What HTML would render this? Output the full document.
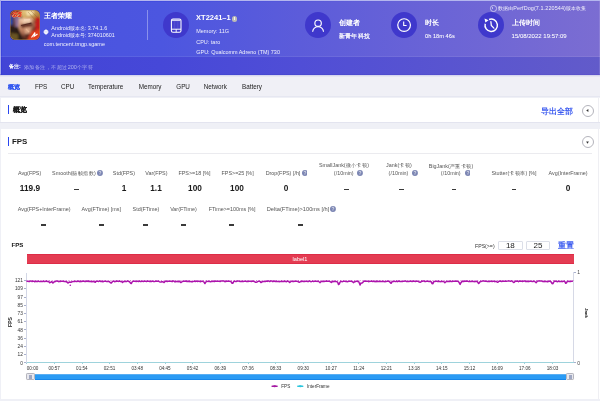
<!DOCTYPE html>
<html><head><meta charset="utf-8">
<style>
html,body{margin:0;padding:0}
body{width:600px;height:401px;overflow:hidden;position:relative;background:#eff0f6;font-family:"Liberation Sans",sans-serif;color:#333}
.a{position:absolute;white-space:nowrap}
.hdr{position:absolute;left:0;top:0;width:600px;height:75px;background:linear-gradient(90deg,rgb(72,82,224) 0%,rgb(76,86,224) 27%,rgb(92,92,218) 50%,rgb(123,109,210) 100%);box-shadow:0 1px 2px rgba(70,70,190,.3)}
.note{position:absolute;left:0;top:56.6px;width:600px;height:17.9px;background:linear-gradient(90deg,rgb(66,68,214) 0%,rgb(70,72,216) 27%,rgb(80,78,214) 50%,rgb(98,91,202) 100%)}
.w{color:#fff}
.circ{position:absolute;width:26px;height:26px;border-radius:50%;background:#3f38cc}
.circ svg{position:absolute;left:0;top:0}
.tabs{position:absolute;left:0;top:75px;width:600px;height:22px;background:#f0f0f6}
.card{position:absolute;left:1px;width:599px;background:#fff}
.lbl{position:absolute;font-size:5.4px;color:#555;line-height:8px;text-align:center;white-space:nowrap}
.val{position:absolute;font-size:9.3px;font-weight:bold;color:#1a1a1a;line-height:10px;text-align:center;white-space:nowrap;transform:scaleX(0.89)}
.q{position:absolute;width:5.6px;height:5.6px;border-radius:50%;background:#8088bc}
.q:after{content:"?";position:absolute;left:0;top:0;width:5.6px;line-height:5.6px;font-size:4.5px;color:#fff;text-align:center;font-weight:bold}
.tab{position:absolute;top:82px;font-size:6.3px;line-height:10px;color:#222}
.yl{position:absolute;width:30px;text-align:right;font-size:4.8px;line-height:6px;color:#333}
.xr{position:absolute;font-size:5px;line-height:6px;color:#444}
.xl{position:absolute;font-size:4.6px;line-height:6px;color:#333;white-space:nowrap}
</style></head><body><div id="root" style="position:absolute;left:0;top:0;width:600px;height:401px;will-change:transform;overflow:hidden;background:#eff0f6">
<div class="hdr">
  <div class="note"></div>
  <div class="a" style="left:1px;top:1px;width:599px;height:1px;background:linear-gradient(90deg,rgba(40,50,220,.5),rgba(40,50,220,.15) 40%,rgba(40,50,220,0) 70%)"></div>
  <div class="a" style="left:599px;top:0;width:1px;height:75px;background:rgba(255,255,255,.12)"></div>
  <div class="a" style="left:1px;top:1px;width:1px;height:74px;background:rgba(40,50,220,.4)"></div>
  <div class="a" style="left:0;top:0;width:600px;height:1px;background:#b4b6ee"></div>
  <div class="a" style="left:0;top:0;width:1px;height:75px;background:#a4a8ea"></div>
  <div class="a" style="left:0;top:74px;width:600px;height:1px;background:rgba(40,40,190,.35)"></div>
</div>
<!-- game icon -->
<svg class="a" style="left:9.5px;top:10.2px" width="30" height="30" viewBox="0 0 30 30">
  <defs>
    <clipPath id="rc"><rect x="0" y="0" width="30" height="30" rx="5.5"/></clipPath>
    <filter id="bl" x="-20%" y="-20%" width="140%" height="140%"><feGaussianBlur stdDeviation="0.9"/></filter>
    <filter id="bl2"><feGaussianBlur stdDeviation="0.3"/></filter>
    <linearGradient id="hair" x1="0" y1="0" x2="1" y2="1"><stop offset="0" stop-color="#f0d890"/><stop offset="0.5" stop-color="#c09048"/><stop offset="1" stop-color="#6a4422"/></linearGradient>
    <linearGradient id="skin" x1="0.2" y1="0" x2="0.8" y2="1"><stop offset="0" stop-color="#eec4a2"/><stop offset="0.45" stop-color="#c08060"/><stop offset="1" stop-color="#5a2820"/></linearGradient>
  </defs>
  <g clip-path="url(#rc)">
    <rect width="30" height="30" fill="#4a2418"/>
    <g filter="url(#bl)">
      <rect x="-2" y="-2" width="16" height="9" fill="#9a3020"/>
      <path d="M12 -2 L32 -2 L32 9 L29 18 L25 11 L19 8 L13 9 L11 5 Z" fill="url(#hair)"/>
      <path d="M16 1 L24 1 L23 5 L17 6 Z" fill="#f8e4b0"/>
      <rect x="-2" y="6" width="5" height="9" fill="#2848b0"/>
      <path d="M4 7 L10 6 L10 17 L5 18 Z" fill="#8a6c94"/>
      <path d="M9 8 L23 8 L25 15 L22 25 L15 28 L8 21 Z" fill="url(#skin)"/>
      <path d="M12 9 L21 9 L21 13 L13 13.5 Z" fill="#f2d0b0"/>
      <path d="M10 15 L22 12.5 L23 15.5 L12 18 Z" fill="#5a2418"/>
      <path d="M14 18 L21 17.5 L20 23 L15 24 Z" fill="#daa482"/>
      <path d="M14 24.5 L20 24 L18 26.5 L15 26.5 Z" fill="#4a1e16"/>
      <rect x="25" y="7" width="7" height="13" fill="#c41e1a"/>
      <path d="M-2 16 L8 17 L11 24 L13 32 L-2 32 Z" fill="#2c1e14"/>
      <path d="M1 23 L8 24 L8 30 L0 30 Z" fill="#6a5424"/>
      <path d="M16 32 L22 21 L32 19 L32 32 Z" fill="#e43c1a"/>
    </g>
    <g filter="url(#bl2)">
      <path d="M11 15.5 L21.5 13.2" stroke="#4a1a12" stroke-width="1.2" opacity="0.8"/>
      <path d="M14 10 L20 9.5" stroke="#f8dcc0" stroke-width="1.5" opacity="0.7"/>
      <path d="M18 2 L27 12 M21 1 L29 9" stroke="#8a5a28" stroke-width="0.6" opacity="0.6"/>
      <path d="M16 19 L19 22" stroke="#f0c09a" stroke-width="1.2" opacity="0.6"/>
      <text x="2.2" y="7.4" font-family="Liberation Sans" font-weight="bold" font-style="italic" font-size="7.8" fill="#e82818" stroke="#ffe08a" stroke-width="0.55" paint-order="stroke">S5</text>
      <path d="M21.5 27.5 L25 22.5 L24.2 26.2 L27.5 24" stroke="#fff" stroke-width="1.2" fill="none"/>
    </g>
  </g>
  <rect x="0.4" y="0.4" width="29.2" height="29.2" rx="5.2" fill="none" stroke="#c8a048" stroke-width="0.7" opacity="0.7"/>
  <rect x="-0.2" y="-0.2" width="30.4" height="30.4" rx="5.8" fill="none" stroke="#30309a" stroke-width="0.6" opacity="0.6"/>
</svg>
<div class="a w" style="left:44px;top:11px;font-size:7.4px;line-height:10px;font-weight:bold">王者荣耀</div>
<svg class="a" style="left:43.4px;top:28.6px" width="6" height="6" viewBox="0 0 6 6"><path d="M3 0.3 L4.4 1.2 L5.7 3 L4.4 4.8 L3 5.7 L1.6 4.8 L0.3 3 L1.6 1.2 Z" fill="#fff" opacity="0.95"/><path d="M0.8 2.9 H5.2" stroke="#4a50da" stroke-width="0.35" opacity="0.5"/></svg>
<div class="a w" style="left:51.3px;top:23.6px;font-size:5.4px;line-height:8px;opacity:.92">Android版本名: 3.74.1.6</div>
<div class="a w" style="left:51.3px;top:31.3px;font-size:5.4px;line-height:8px;opacity:.92">Android版本号: 374010601</div>
<div class="a w" style="left:43.7px;top:40.3px;font-size:5.46px;line-height:8px;opacity:.92">com.tencent.tmgp.sgame</div>
<div class="a" style="left:147px;top:10px;width:0.8px;height:30px;background:rgba(255,255,255,.35)"></div>

<!-- device -->
<div class="circ" style="left:162.5px;top:11.7px;width:26.4px;height:26.4px">
 <svg width="26.4" height="26.4" viewBox="0 0 26.4 26.4"><rect x="8.4" y="7" width="9.6" height="13.3" rx="1.6" fill="none" stroke="#fff" stroke-width="1.05"/><rect x="9" y="7.5" width="8.4" height="1.6" fill="#fff" opacity="0.75"/><path d="M9.2 11 H17.2 M9.2 13 H17.2 M9.2 15 H17.2 M11.6 9.5 V16.5 M14.8 9.5 V16.5" stroke="#fff" stroke-width="0.35" opacity="0.25"/><line x1="8.4" y1="17.2" x2="18" y2="17.2" stroke="#fff" stroke-width="1"/><line x1="13.2" y1="17.2" x2="13.2" y2="20.3" stroke="#fff" stroke-width="0.9"/></svg>
</div>
<div class="a w" style="left:196.1px;top:13px;font-size:7.5px;line-height:10px;font-weight:bold">XT2241–1</div>
<div class="a" style="left:231.9px;top:16px;width:5.6px;height:5.6px;border-radius:50%;background:#bdbcb6"></div><div class="a" style="left:234.4px;top:17.1px;width:0.7px;height:0.7px;background:#f4f4f4"></div><div class="a" style="left:234.4px;top:18.2px;width:0.7px;height:2.3px;background:#f4f4f4"></div>
<div class="a w" style="left:196.3px;top:27.1px;font-size:5.46px;line-height:8px;opacity:.92">Memory: 11G</div>
<div class="a w" style="left:196.3px;top:38px;font-size:5.46px;line-height:8px;opacity:.92">CPU: taro</div>
<div class="a w" style="left:196.3px;top:48.3px;font-size:5.46px;line-height:8px;opacity:.92">GPU: Qualcomm Adreno (TM) 730</div>

<!-- creator -->
<div class="circ" style="left:305px;top:12.3px;width:26.2px;height:26.2px">
 <svg width="26.2" height="26.2" viewBox="0 0 26 26"><circle cx="13" cy="11.1" r="3.2" fill="none" stroke="#fff" stroke-width="1.15"/><path d="M7.6 19.6 C8.1 16.1 10.5 14.6 13 14.6 C15.5 14.6 17.9 16.1 18.4 19.6" fill="none" stroke="#fff" stroke-width="1.15"/></svg>
</div>
<div class="a w" style="left:338.7px;top:17.5px;font-size:7.3px;line-height:10px;font-weight:bold">创建者</div>
<div class="a w" style="left:338.7px;top:31.8px;font-size:5.5px;line-height:8px;-webkit-text-stroke:0.18px #fff">新青年 科技</div>

<!-- duration -->
<div class="circ" style="left:391.3px;top:11.9px;width:26.2px;height:26.2px">
 <svg width="26.2" height="26.2" viewBox="0 0 26 26"><circle cx="13" cy="13" r="6.3" fill="none" stroke="#fff" stroke-width="1.2"/><path d="M12.6 9.5 V13.4 H15.5" fill="none" stroke="#fff" stroke-width="1.1"/></svg>
</div>
<div class="a w" style="left:425px;top:17.6px;font-size:7.4px;line-height:10px;font-weight:bold">时长</div>
<div class="a w" style="left:425px;top:32.2px;font-size:5.7px;line-height:8px;-webkit-text-stroke:0.05px #fff">0h 18m 46s</div>

<!-- upload -->
<div class="circ" style="left:477.6px;top:12px;width:26.4px;height:26.4px">
 <svg width="26.4" height="26.4" viewBox="0 0 26.4 26.4"><path d="M11.08 7.47 A6.2 6.2 0 1 1 7.21 11.7" fill="none" stroke="#fff" stroke-width="1.45"/><path d="M6.5 6.4 L10.6 8.3 L7.4 10.6 Z" fill="#fff"/><path d="M12.9 9.6 L13.3 13.4 L15.9 16.2" fill="none" stroke="#fff" stroke-width="1.25" stroke-linecap="round"/></svg>
</div>
<div class="a w" style="left:511.6px;top:18px;font-size:7.3px;line-height:10px;font-weight:bold">上传时间</div>
<div class="a w" style="left:511.6px;top:32px;font-size:6px;line-height:8px;-webkit-text-stroke:0.05px #fff">15/08/2022 19:57:09</div>
<div class="a" style="left:490.4px;top:5.4px;width:4.4px;height:4.4px;border-radius:50%;border:0.4px solid rgba(255,255,255,.55)"></div><div class="a" style="left:492.45px;top:6.8px;width:0.5px;height:2px;background:rgba(255,255,255,.55)"></div>
<div class="a w" style="left:498px;top:3.6px;font-size:5.45px;letter-spacing:0.1px;line-height:8px;opacity:.9">数据由PerfDog(7.1.220544)版本收集</div>

<!-- note -->
<div class="a w" style="left:9px;top:62px;font-size:5.3px;line-height:8px;font-weight:bold">备注:</div>
<div class="a" style="left:24px;top:63.2px;font-size:6px;line-height:8px;color:rgba(255,255,255,.55);transform:scale(0.91);transform-origin:0 50%">添加备注，不超过200个字符</div>

<!-- tabs -->
<div class="tabs"></div>
<div class="a" style="left:0;top:75px;width:600px;height:1px;background:#d6d6ee"></div><div class="a" style="left:0;top:76px;width:600px;height:1px;background:#e6e6f2"></div>
<div class="a" style="left:0;top:56.2px;width:600px;height:0.8px;background:rgba(255,255,255,.08)"></div>

<div class="tab" style="left:8px;color:#3358f0;font-weight:bold;-webkit-text-stroke:0.15px #3358f0">概览</div>
<div class="tab" style="left:35px">FPS</div>
<div class="tab" style="left:61px">CPU</div>
<div class="tab" style="left:88px">Temperature</div>
<div class="tab" style="left:138.75px">Memory</div>
<div class="tab" style="left:176.25px">GPU</div>
<div class="tab" style="left:203.75px">Network</div>
<div class="tab" style="left:242px">Battery</div>

<div class="a" style="left:0;top:96.3px;width:600px;height:1.2px;background:#e6e7f1"></div>
<!-- overview card -->
<div class="card" style="top:97.5px;height:24.5px"></div>
<div class="a" style="left:598.4px;top:97.5px;width:0.6px;height:24.5px;background:#efeff3"></div>
<div class="a" style="left:8px;top:105px;width:1.4px;height:9px;background:#2946f0"></div>
<div class="a" style="left:12.5px;top:105px;font-size:7px;line-height:10px;font-weight:bold;color:#1a1a1a;-webkit-text-stroke:0.2px #1a1a1a">概览</div>
<div class="a" style="left:541.2px;top:107.3px;font-size:7.6px;line-height:10px;color:#3d5cf0;font-weight:bold">导出全部</div>
<div class="a" style="left:581.7px;top:104.7px;width:10px;height:10px;border-radius:50%;border:0.6px solid #b4b4bc"></div>
<svg class="a" style="left:585px;top:108px" width="5" height="5" viewBox="0 0 5 5"><path d="M3.4 1.1 V3.9 L1.2 2.5 Z" fill="#333"/></svg>

<div class="a" style="left:0;top:122px;width:600px;height:1.2px;background:#e3e4ef"></div>
<!-- FPS card -->
<div class="card" style="top:128.8px;height:270.4px"></div>
<div class="a" style="left:598.4px;top:128.8px;width:0.6px;height:270.4px;background:#efeff3"></div>
<div class="a" style="left:8px;top:137px;width:1.4px;height:8.6px;background:#2946f0"></div>
<div class="a" style="left:12px;top:136.6px;font-size:7.9px;line-height:10px;font-weight:bold;color:#1a1a1a">FPS</div>
<div class="a" style="left:581.7px;top:136.1px;width:10px;height:10px;border-radius:50%;border:0.6px solid #b4b4bc"></div>
<svg class="a" style="left:584.7px;top:139.5px" width="5" height="5" viewBox="0 0 5 5"><path d="M1.1 1.6 H3.9 L2.5 3.8 Z" fill="#333"/></svg>
<div class="a" style="left:8px;top:153px;width:584px;height:0.8px;background:#ebebef"></div>

<div class="lbl" style="left:-10.45px;width:80px;top:169.00px">Avg(FPS)</div>
<div class="val" style="left:-0.50px;width:60px;top:182.80px">119.9</div>
<div class="lbl" style="left:33.75px;width:80px;top:169.00px;font-size:6px;transform:scale(0.9)">Smooth(稳帧指数)</div>
<svg class="a" style="left:96.80px;top:170.05px" width="5.9" height="5.9" viewBox="0 0 6 6"><circle cx="3" cy="3" r="3" fill="#7a84b2"/><path d="M2.05 2.2 A0.95 0.95 0 1 1 3.3 3.1 Q3 3.3 3 3.8" fill="none" stroke="#fff" stroke-width="0.65"/><circle cx="3" cy="4.7" r="0.38" fill="#fff"/></svg>
<div class="a" style="left:74.25px;top:188.55px;width:4.8px;height:1.3px;background:#3a3a3a"></div>
<div class="lbl" style="left:83.90px;width:80px;top:169.00px">Std(FPS)</div>
<div class="val" style="left:93.80px;width:60px;top:182.80px">1</div>
<div class="lbl" style="left:116.40px;width:80px;top:169.00px">Var(FPS)</div>
<div class="val" style="left:126.30px;width:60px;top:182.80px">1.1</div>
<div class="lbl" style="left:154.50px;width:80px;top:169.00px">FPS&gt;=18 [%]</div>
<div class="val" style="left:164.50px;width:60px;top:182.80px">100</div>
<div class="lbl" style="left:197.62px;width:80px;top:169.00px">FPS&gt;=25 [%]</div>
<div class="val" style="left:207.40px;width:60px;top:182.80px">100</div>
<div class="lbl" style="left:243.00px;width:80px;top:169.00px">Drop(FPS) [/h]</div>
<svg class="a" style="left:301.60px;top:170.05px" width="5.9" height="5.9" viewBox="0 0 6 6"><circle cx="3" cy="3" r="3" fill="#7a84b2"/><path d="M2.05 2.2 A0.95 0.95 0 1 1 3.3 3.1 Q3 3.3 3 3.8" fill="none" stroke="#fff" stroke-width="0.65"/><circle cx="3" cy="4.7" r="0.38" fill="#fff"/></svg>
<div class="val" style="left:256.00px;width:60px;top:182.80px">0</div>
<div class="lbl" style="left:303.50px;width:80px;top:161.20px;font-size:6px;transform:scale(0.9)">SmallJank(微小卡顿)</div>
<div class="lbl" style="left:303.75px;width:80px;top:168.80px">(/10min)</div>
<svg class="a" style="left:356.90px;top:169.85px" width="5.9" height="5.9" viewBox="0 0 6 6"><circle cx="3" cy="3" r="3" fill="#7a84b2"/><path d="M2.05 2.2 A0.95 0.95 0 1 1 3.3 3.1 Q3 3.3 3 3.8" fill="none" stroke="#fff" stroke-width="0.65"/><circle cx="3" cy="4.7" r="0.38" fill="#fff"/></svg>
<div class="a" style="left:344.15px;top:188.55px;width:4.8px;height:1.3px;background:#3a3a3a"></div>
<div class="lbl" style="left:359.00px;width:80px;top:161.20px;font-size:6px;transform:scale(0.9)">Jank(卡顿)</div>
<div class="lbl" style="left:358.50px;width:80px;top:168.80px">(/10min)</div>
<svg class="a" style="left:412.20px;top:169.85px" width="5.9" height="5.9" viewBox="0 0 6 6"><circle cx="3" cy="3" r="3" fill="#7a84b2"/><path d="M2.05 2.2 A0.95 0.95 0 1 1 3.3 3.1 Q3 3.3 3 3.8" fill="none" stroke="#fff" stroke-width="0.65"/><circle cx="3" cy="4.7" r="0.38" fill="#fff"/></svg>
<div class="a" style="left:399.15px;top:188.55px;width:4.8px;height:1.3px;background:#3a3a3a"></div>
<div class="lbl" style="left:411.25px;width:80px;top:161.50px;font-size:6px;transform:scale(0.9)">BigJank(严重卡顿)</div>
<div class="lbl" style="left:410.75px;width:80px;top:168.80px">(/10min)</div>
<svg class="a" style="left:464.60px;top:169.85px" width="5.9" height="5.9" viewBox="0 0 6 6"><circle cx="3" cy="3" r="3" fill="#7a84b2"/><path d="M2.05 2.2 A0.95 0.95 0 1 1 3.3 3.1 Q3 3.3 3 3.8" fill="none" stroke="#fff" stroke-width="0.65"/><circle cx="3" cy="4.7" r="0.38" fill="#fff"/></svg>
<div class="a" style="left:451.55px;top:188.55px;width:4.8px;height:1.3px;background:#3a3a3a"></div>
<div class="lbl" style="left:474.15px;width:80px;top:169.00px;font-size:6px;transform:scale(0.9)">Stutter(卡顿率) [%]</div>
<div class="a" style="left:511.55px;top:188.55px;width:4.8px;height:1.3px;background:#3a3a3a"></div>
<div class="lbl" style="left:528.05px;width:80px;top:169.00px">Avg(InterFrame)</div>
<div class="val" style="left:538.00px;width:60px;top:182.80px">0</div>
<div class="lbl" style="left:4.12px;width:80px;top:205.25px">Avg(FPS+InterFrame)</div>
<div class="a" style="left:41.30px;top:224.35px;width:4.8px;height:1.3px;background:#3a3a3a"></div>
<div class="lbl" style="left:61.25px;width:80px;top:205.25px">Avg(FTime) [ms]</div>
<div class="a" style="left:98.80px;top:224.35px;width:4.8px;height:1.3px;background:#3a3a3a"></div>
<div class="lbl" style="left:106.00px;width:80px;top:205.25px">Std(FTime)</div>
<div class="a" style="left:143.30px;top:224.35px;width:4.8px;height:1.3px;background:#3a3a3a"></div>
<div class="lbl" style="left:143.50px;width:80px;top:205.25px">Var(FTime)</div>
<div class="a" style="left:181.05px;top:224.35px;width:4.8px;height:1.3px;background:#3a3a3a"></div>
<div class="lbl" style="left:192.05px;width:80px;top:205.25px">FTime&gt;=100ms [%]</div>
<div class="a" style="left:229.15px;top:224.35px;width:4.8px;height:1.3px;background:#3a3a3a"></div>
<div class="lbl" style="left:257.65px;width:80px;top:205.25px;transform:scaleX(1.05)">Delta(FTime)&gt;100ms [/h]</div>
<svg class="a" style="left:329.80px;top:206.30px" width="5.9" height="5.9" viewBox="0 0 6 6"><circle cx="3" cy="3" r="3" fill="#7a84b2"/><path d="M2.05 2.2 A0.95 0.95 0 1 1 3.3 3.1 Q3 3.3 3 3.8" fill="none" stroke="#fff" stroke-width="0.65"/><circle cx="3" cy="4.7" r="0.38" fill="#fff"/></svg>
<div class="a" style="left:298.15px;top:224.35px;width:4.8px;height:1.3px;background:#3a3a3a"></div>
<!-- chart header -->
<div class="a" style="left:11.5px;top:241.7px;font-size:6.1px;line-height:6px;font-weight:bold;color:#111">FPS</div>
<div class="a" style="left:475px;top:243px;font-size:5.2px;line-height:6px;color:#333">FPS(&gt;=)</div>
<div class="a" style="left:498px;top:240.7px;width:24.7px;height:9px;box-sizing:border-box;border:0.7px solid #dcdfe8;border-radius:1px;text-align:center;font-size:8px;line-height:8px;color:#222">18</div>
<div class="a" style="left:525.8px;top:240.7px;width:24.2px;height:9px;box-sizing:border-box;border:0.7px solid #dcdfe8;border-radius:1px;text-align:center;font-size:8px;line-height:8px;color:#222">25</div>
<div class="a" style="left:558px;top:241px;font-size:7.6px;line-height:10px;color:#3d5cf0;font-weight:bold">重置</div>
<div class="a" style="left:26.5px;top:253.8px;width:547.2px;height:10.2px;box-sizing:border-box;border-top:1px solid #dd2c47;border-bottom:1px solid #dd2c47;background:#e43c52"></div>
<div class="a" style="left:280px;top:255.7px;width:40px;text-align:center;font-size:5.6px;line-height:7px;color:#fff">label1</div>
<div class="a" style="left:4px;top:318.8px;width:12px;text-align:center;font-size:5.1px;line-height:6px;font-weight:bold;color:#222;transform:rotate(-90deg)">FPS</div>
<div class="a" style="left:578.7px;top:309.5px;width:14px;text-align:center;font-size:4.4px;line-height:6px;font-weight:bold;color:#222;transform:rotate(90deg)">Jank</div>
<!-- slider -->
<div class="a" style="left:34.5px;top:374.2px;width:531.5px;height:5.5px;box-sizing:border-box;border-top:0.8px solid #5aaef2;border-bottom:1px solid #1686ea;background:#2a9bf4"></div>
<div class="a" style="left:26.25px;top:373.1px;width:8.25px;height:7.3px;box-sizing:border-box;border:0.7px solid #b4b4bc;border-radius:1.2px;background:#e8e8ee"></div>
<div class="a" style="left:29px;top:375.25px;width:3.25px;height:3.25px;background:#a0a8c2"></div>
<div class="a" style="left:566px;top:373.1px;width:8px;height:7.3px;box-sizing:border-box;border:0.7px solid #b4b4bc;border-radius:1.2px;background:#e8e8ee"></div>
<div class="a" style="left:568.5px;top:375.25px;width:3.25px;height:3.25px;background:#a0a8c2"></div>
<!-- legend -->
<svg class="a" style="left:270px;top:383px" width="36" height="7" viewBox="0 0 36 7"><line x1="2.1" y1="3.2" x2="7.1" y2="3.2" stroke="#a51aa3" stroke-width="1.4" stroke-linecap="round"/><ellipse cx="4.6" cy="3.2" rx="1.5" ry="1.05" fill="#a51aa3"/><line x1="27.8" y1="3.2" x2="32.8" y2="3.2" stroke="#2cc6dd" stroke-width="1.4" stroke-linecap="round"/><ellipse cx="30.3" cy="3.2" rx="1.5" ry="1.05" fill="#2cc6dd"/></svg>
<div class="a" style="left:281.3px;top:384px;font-size:4.6px;line-height:6px;color:#333">FPS</div>
<div class="a" style="left:307px;top:384px;font-size:4.6px;line-height:6px;color:#333">InterFrame</div>
<div class="a" style="left:26.10px;top:273px;width:0.8px;height:89.50px;background:#d3d7e6"></div>
<div class="a" style="left:573.20px;top:272px;width:0.8px;height:90.50px;background:#d6d9e6"></div>
<div class="a" style="left:24.3px;top:280.15px;width:2.1px;height:0.7px;background:#a9b0cc"></div>
<div class="yl" style="left:-7.10px;top:278.00px">121</div>
<div class="a" style="left:24.3px;top:288.35px;width:2.1px;height:0.7px;background:#a9b0cc"></div>
<div class="yl" style="left:-7.10px;top:286.26px">109</div>
<div class="a" style="left:24.3px;top:296.55px;width:2.1px;height:0.7px;background:#a9b0cc"></div>
<div class="yl" style="left:-7.10px;top:294.52px">97</div>
<div class="a" style="left:24.3px;top:304.75px;width:2.1px;height:0.7px;background:#a9b0cc"></div>
<div class="yl" style="left:-7.10px;top:302.78px">85</div>
<div class="a" style="left:24.3px;top:312.95px;width:2.1px;height:0.7px;background:#a9b0cc"></div>
<div class="yl" style="left:-7.10px;top:311.04px">73</div>
<div class="a" style="left:24.3px;top:321.15px;width:2.1px;height:0.7px;background:#a9b0cc"></div>
<div class="yl" style="left:-7.10px;top:319.30px">61</div>
<div class="a" style="left:24.3px;top:329.35px;width:2.1px;height:0.7px;background:#a9b0cc"></div>
<div class="yl" style="left:-7.10px;top:327.56px">48</div>
<div class="a" style="left:24.3px;top:337.55px;width:2.1px;height:0.7px;background:#a9b0cc"></div>
<div class="yl" style="left:-7.10px;top:335.82px">36</div>
<div class="a" style="left:24.3px;top:345.75px;width:2.1px;height:0.7px;background:#a9b0cc"></div>
<div class="yl" style="left:-7.10px;top:344.08px">24</div>
<div class="a" style="left:24.3px;top:353.95px;width:2.1px;height:0.7px;background:#a9b0cc"></div>
<div class="yl" style="left:-7.10px;top:352.34px">12</div>
<div class="a" style="left:24.3px;top:362.15px;width:2.1px;height:0.7px;background:#a9b0cc"></div>
<div class="yl" style="left:-7.10px;top:360.60px">0</div>
<div class="a" style="left:573.60px;top:271.6px;width:2.2px;height:0.7px;background:#a9b0cc"></div>
<div class="xr" style="left:577.3px;top:269.00px">1</div>
<div class="a" style="left:573.60px;top:362.15px;width:2.2px;height:0.7px;background:#a9b0cc"></div>
<div class="xr" style="left:577.3px;top:359.50px">0</div>
<div class="a" style="left:26.50px;top:362.05px;width:547.10px;height:0.9px;background:#9ed3dc"></div>
<div class="a" style="left:26.15px;top:362.50px;width:0.7px;height:1.8px;background:#9ed3dc"></div>
<div class="xl" style="left:26.8px;top:366.2px">00:00</div>
<div class="a" style="left:53.83px;top:362.50px;width:0.7px;height:1.8px;background:#9ed3dc"></div>
<div class="xl" style="left:39.18px;width:30px;text-align:center;top:366.2px">00:57</div>
<div class="a" style="left:81.52px;top:362.50px;width:0.7px;height:1.8px;background:#9ed3dc"></div>
<div class="xl" style="left:66.87px;width:30px;text-align:center;top:366.2px">01:54</div>
<div class="a" style="left:109.20px;top:362.50px;width:0.7px;height:1.8px;background:#9ed3dc"></div>
<div class="xl" style="left:94.55px;width:30px;text-align:center;top:366.2px">02:51</div>
<div class="a" style="left:136.89px;top:362.50px;width:0.7px;height:1.8px;background:#9ed3dc"></div>
<div class="xl" style="left:122.24px;width:30px;text-align:center;top:366.2px">03:48</div>
<div class="a" style="left:164.57px;top:362.50px;width:0.7px;height:1.8px;background:#9ed3dc"></div>
<div class="xl" style="left:149.92px;width:30px;text-align:center;top:366.2px">04:45</div>
<div class="a" style="left:192.26px;top:362.50px;width:0.7px;height:1.8px;background:#9ed3dc"></div>
<div class="xl" style="left:177.61px;width:30px;text-align:center;top:366.2px">05:42</div>
<div class="a" style="left:219.94px;top:362.50px;width:0.7px;height:1.8px;background:#9ed3dc"></div>
<div class="xl" style="left:205.29px;width:30px;text-align:center;top:366.2px">06:39</div>
<div class="a" style="left:247.62px;top:362.50px;width:0.7px;height:1.8px;background:#9ed3dc"></div>
<div class="xl" style="left:232.97px;width:30px;text-align:center;top:366.2px">07:36</div>
<div class="a" style="left:275.31px;top:362.50px;width:0.7px;height:1.8px;background:#9ed3dc"></div>
<div class="xl" style="left:260.66px;width:30px;text-align:center;top:366.2px">08:33</div>
<div class="a" style="left:302.99px;top:362.50px;width:0.7px;height:1.8px;background:#9ed3dc"></div>
<div class="xl" style="left:288.34px;width:30px;text-align:center;top:366.2px">09:30</div>
<div class="a" style="left:330.68px;top:362.50px;width:0.7px;height:1.8px;background:#9ed3dc"></div>
<div class="xl" style="left:316.03px;width:30px;text-align:center;top:366.2px">10:27</div>
<div class="a" style="left:358.36px;top:362.50px;width:0.7px;height:1.8px;background:#9ed3dc"></div>
<div class="xl" style="left:343.71px;width:30px;text-align:center;top:366.2px">11:24</div>
<div class="a" style="left:386.04px;top:362.50px;width:0.7px;height:1.8px;background:#9ed3dc"></div>
<div class="xl" style="left:371.39px;width:30px;text-align:center;top:366.2px">12:21</div>
<div class="a" style="left:413.73px;top:362.50px;width:0.7px;height:1.8px;background:#9ed3dc"></div>
<div class="xl" style="left:399.08px;width:30px;text-align:center;top:366.2px">13:18</div>
<div class="a" style="left:441.41px;top:362.50px;width:0.7px;height:1.8px;background:#9ed3dc"></div>
<div class="xl" style="left:426.76px;width:30px;text-align:center;top:366.2px">14:15</div>
<div class="a" style="left:469.10px;top:362.50px;width:0.7px;height:1.8px;background:#9ed3dc"></div>
<div class="xl" style="left:454.45px;width:30px;text-align:center;top:366.2px">15:12</div>
<div class="a" style="left:496.78px;top:362.50px;width:0.7px;height:1.8px;background:#9ed3dc"></div>
<div class="xl" style="left:482.13px;width:30px;text-align:center;top:366.2px">16:09</div>
<div class="a" style="left:524.47px;top:362.50px;width:0.7px;height:1.8px;background:#9ed3dc"></div>
<div class="xl" style="left:509.82px;width:30px;text-align:center;top:366.2px">17:06</div>
<div class="a" style="left:552.15px;top:362.50px;width:0.7px;height:1.8px;background:#9ed3dc"></div>
<div class="xl" style="left:537.50px;width:30px;text-align:center;top:366.2px">18:03</div>
<svg class="a" style="left:0;top:0" width="600" height="401"><polyline points="26.50,281.17 27.30,281.38 28.10,281.26 28.90,281.42 29.70,281.44 30.50,281.05 31.30,281.01 32.10,281.59 32.90,281.18 33.70,281.16 34.50,281.70 35.30,281.33 36.10,281.59 36.90,281.33 37.70,281.45 38.50,281.11 39.30,281.44 40.10,281.61 40.90,281.37 41.70,281.52 42.50,281.47 43.30,281.04 44.10,281.53 44.90,281.41 45.70,281.21 46.50,281.02 47.30,281.61 48.10,281.34 48.90,281.77 49.70,282.69 50.50,282.38 51.30,281.84 52.10,281.83 52.90,283.04 53.70,282.13 54.50,281.75 55.30,281.62 56.10,281.07 56.90,281.10 57.70,281.15 58.50,281.68 59.30,281.31 60.10,281.44 60.90,281.21 61.70,281.36 62.50,281.27 63.30,281.25 64.10,281.41 64.90,281.41 65.70,281.64 66.50,281.57 67.30,282.47 68.10,283.08 68.90,282.30 69.70,282.06 70.50,282.31 71.30,282.15 72.10,281.73 72.90,281.63 73.70,281.40 74.50,281.50 75.30,281.15 76.10,281.58 76.90,281.40 77.70,281.20 78.50,281.04 79.30,281.60 80.10,281.69 80.90,281.06 81.70,281.56 82.50,281.29 83.30,281.11 84.10,281.21 84.90,281.54 85.70,281.61 86.50,281.03 87.30,281.43 88.10,281.03 88.90,281.50 89.70,281.23 90.50,281.62 91.30,281.69 92.10,281.35 92.90,281.70 93.70,281.34 94.50,281.79 95.30,282.31 96.10,281.25 96.90,281.15 97.70,281.29 98.50,281.43 99.30,281.11 100.10,281.03 100.90,281.61 101.70,281.22 102.50,281.67 103.30,281.63 104.10,281.26 104.90,281.32 105.70,281.36 106.50,281.45 107.30,281.42 108.10,281.39 108.90,281.44 109.70,281.91 110.50,282.82 111.30,283.09 112.10,281.95 112.90,281.19 113.70,281.21 114.50,281.68 115.30,281.36 116.10,281.38 116.90,281.01 117.70,281.29 118.50,281.41 119.30,281.01 120.10,281.43 120.90,281.48 121.70,281.50 122.50,282.44 123.30,281.78 124.10,281.52 124.90,281.25 125.70,281.49 126.50,281.52 127.30,281.02 128.10,281.04 128.90,281.48 129.70,281.98 130.50,283.01 131.30,283.56 132.10,281.98 132.90,281.25 133.70,281.26 134.50,281.22 135.30,281.26 136.10,281.42 136.90,281.21 137.70,281.26 138.50,281.54 139.30,281.02 140.10,281.40 140.90,281.51 141.70,281.22 142.50,281.16 143.30,281.56 144.10,281.17 144.90,281.13 145.70,281.30 146.50,281.49 147.30,281.07 148.10,281.23 148.90,281.23 149.70,281.58 150.50,281.31 151.30,281.60 152.10,281.12 152.90,281.24 153.70,281.46 154.50,281.62 155.30,281.32 156.10,281.16 156.90,281.08 157.70,281.37 158.50,281.13 159.30,281.59 160.10,281.95 160.90,282.12 161.70,281.74 162.50,281.69 163.30,282.00 164.10,282.55 164.90,281.61 165.70,281.12 166.50,281.20 167.30,281.56 168.10,281.19 168.90,281.24 169.70,281.29 170.50,281.29 171.30,281.29 172.10,281.64 172.90,281.11 173.70,281.00 174.50,281.66 175.30,281.62 176.10,281.69 176.90,281.30 177.70,281.67 178.50,281.65 179.30,281.18 180.10,281.89 180.90,282.57 181.70,282.01 182.50,281.43 183.30,281.20 184.10,281.24 184.90,281.16 185.70,281.05 186.50,281.41 187.30,281.20 188.10,281.57 188.90,281.03 189.70,281.63 190.50,281.49 191.30,281.65 192.10,281.63 192.90,281.63 193.70,281.40 194.50,281.01 195.30,281.52 196.10,281.12 196.90,281.21 197.70,281.46 198.50,281.37 199.30,281.29 200.10,281.66 200.90,281.43 201.70,281.24 202.50,281.18 203.30,281.66 204.10,282.07 204.90,283.52 205.70,282.34 206.50,281.26 207.30,281.38 208.10,281.57 208.90,281.12 209.70,281.55 210.50,281.65 211.30,281.56 212.10,281.58 212.90,281.01 213.70,281.44 214.50,281.60 215.30,281.03 216.10,281.19 216.90,281.19 217.70,281.37 218.50,281.30 219.30,281.33 220.10,281.54 220.90,281.00 221.70,281.04 222.50,281.09 223.30,281.09 224.10,281.05 224.90,281.68 225.70,281.60 226.50,281.06 227.30,281.35 228.10,281.22 228.90,281.22 229.70,281.25 230.50,281.47 231.30,281.83 232.10,283.30 232.90,283.19 233.70,281.65 234.50,281.10 235.30,281.39 236.10,281.50 236.90,281.27 237.70,281.06 238.50,281.12 239.30,281.26 240.10,281.42 240.90,281.55 241.70,281.27 242.50,281.56 243.30,281.44 244.10,281.30 244.90,281.26 245.70,281.35 246.50,281.49 247.30,281.29 248.10,281.49 248.90,281.32 249.70,281.17 250.50,281.38 251.30,281.49 252.10,281.05 252.90,281.30 253.70,281.30 254.50,281.68 255.30,282.20 256.10,282.25 256.90,282.00 257.70,281.58 258.50,281.18 259.30,281.35 260.10,281.45 260.90,282.56 261.70,282.01 262.50,281.68 263.30,281.56 264.10,281.47 264.90,281.51 265.70,281.39 266.50,281.07 267.30,281.41 268.10,281.00 268.90,281.10 269.70,281.54 270.50,281.03 271.30,281.06 272.10,281.07 272.90,281.62 273.70,281.13 274.50,281.02 275.30,281.59 276.10,281.08 276.90,281.59 277.70,281.47 278.50,281.59 279.30,281.67 280.10,281.41 280.90,281.56 281.70,281.03 282.50,281.54 283.30,281.36 284.10,281.50 284.90,281.07 285.70,281.52 286.50,281.65 287.30,281.04 288.10,281.24 288.90,281.62 289.70,282.47 290.50,281.90 291.30,281.25 292.10,281.18 292.90,281.43 293.70,281.53 294.50,281.28 295.30,281.26 296.10,281.28 296.90,281.25 297.70,281.42 298.50,281.79 299.30,282.25 300.10,281.91 300.90,281.30 301.70,281.52 302.50,281.11 303.30,281.48 304.10,281.53 304.90,281.47 305.70,281.36 306.50,281.34 307.30,281.45 308.10,281.63 308.90,281.10 309.70,281.07 310.50,281.52 311.30,281.64 312.10,281.36 312.90,281.31 313.70,281.50 314.50,281.13 315.30,281.19 316.10,281.14 316.90,281.41 317.70,281.22 318.50,281.22 319.30,282.03 320.10,282.66 320.90,281.57 321.70,281.52 322.50,281.29 323.30,281.60 324.10,281.41 324.90,281.19 325.70,281.15 326.50,281.02 327.30,281.34 328.10,281.27 328.90,281.12 329.70,281.38 330.50,281.96 331.30,282.44 332.10,281.33 332.90,281.71 333.70,281.34 334.50,281.42 335.30,281.33 336.10,281.58 336.90,281.63 337.70,282.29 338.50,284.58 339.30,283.91 340.10,281.97 340.90,281.29 341.70,281.51 342.50,281.67 343.30,281.33 344.10,281.16 344.90,281.16 345.70,281.50 346.50,281.47 347.30,281.67 348.10,281.60 348.90,281.17 349.70,281.13 350.50,281.18 351.30,281.13 352.10,281.53 352.90,282.01 353.70,282.63 354.50,281.68 355.30,281.66 356.10,281.22 356.90,281.30 357.70,281.52 358.50,281.28 359.30,282.98 360.10,285.06 360.90,282.94 361.70,283.14 362.50,282.88 363.30,281.72 364.10,281.01 364.90,281.23 365.70,281.31 366.50,281.34 367.30,281.15 368.10,281.41 368.90,281.67 369.70,281.27 370.50,281.38 371.30,281.08 372.10,281.19 372.90,281.47 373.70,281.08 374.50,281.62 375.30,281.64 376.10,281.07 376.90,281.66 377.70,281.26 378.50,281.54 379.30,281.53 380.10,281.21 380.90,281.47 381.70,281.46 382.50,281.56 383.30,281.19 384.10,281.53 384.90,281.67 385.70,281.47 386.50,281.38 387.30,281.08 388.10,281.35 388.90,281.26 389.70,281.75 390.50,282.94 391.30,283.19 392.10,281.58 392.90,281.48 393.70,281.44 394.50,281.13 395.30,281.62 396.10,281.46 396.90,281.09 397.70,281.65 398.50,281.10 399.30,281.23 400.10,281.50 400.90,281.42 401.70,281.39 402.50,281.45 403.30,281.32 404.10,281.22 404.90,281.12 405.70,281.05 406.50,281.50 407.30,281.53 408.10,281.38 408.90,281.52 409.70,281.25 410.50,281.19 411.30,281.27 412.10,281.61 412.90,281.03 413.70,281.35 414.50,281.17 415.30,281.54 416.10,281.25 416.90,281.23 417.70,281.28 418.50,281.44 419.30,282.09 420.10,282.23 420.90,281.96 421.70,281.11 422.50,281.19 423.30,281.07 424.10,281.08 424.90,281.55 425.70,281.51 426.50,281.13 427.30,281.13 428.10,281.29 428.90,281.52 429.70,281.57 430.50,281.55 431.30,281.92 432.10,283.56 432.90,283.74 433.70,281.64 434.50,281.39 435.30,281.40 436.10,281.14 436.90,281.18 437.70,281.55 438.50,281.02 439.30,281.56 440.10,281.62 440.90,281.66 441.70,281.27 442.50,281.39 443.30,281.44 444.10,281.81 444.90,282.67 445.70,282.03 446.50,281.27 447.30,281.60 448.10,281.34 448.90,281.42 449.70,281.51 450.50,281.00 451.30,281.54 452.10,281.46 452.90,281.34 453.70,281.37 454.50,281.32 455.30,281.14 456.10,281.37 456.90,281.03 457.70,281.35 458.50,281.64 459.30,282.95 460.10,284.36 460.90,282.77 461.70,281.71 462.50,281.10 463.30,281.55 464.10,281.44 464.90,281.04 465.70,281.25 466.50,281.16 467.30,281.05 468.10,281.38 468.90,281.65 469.70,281.23 470.50,281.61 471.30,281.49 472.10,281.09 472.90,281.60 473.70,281.42 474.50,281.65 475.30,281.50 476.10,281.52 476.90,281.27 477.70,282.08 478.50,283.50 479.30,282.98 480.10,281.52 480.90,281.54 481.70,281.34 482.50,281.08 483.30,281.03 484.10,281.05 484.90,281.14 485.70,281.11 486.50,281.35 487.30,281.49 488.10,281.38 488.90,281.30 489.70,281.45 490.50,281.21 491.30,281.33 492.10,281.53 492.90,281.28 493.70,281.13 494.50,281.63 495.30,281.51 496.10,281.35 496.90,281.90 497.70,282.32 498.50,281.71 499.30,281.18 500.10,281.00 500.90,281.15 501.70,281.55 502.50,281.10 503.30,281.32 504.10,281.14 504.90,281.15 505.70,281.12 506.50,281.28 507.30,281.12 508.10,281.02 508.90,281.08 509.70,281.12 510.50,281.34 511.30,281.04 512.10,281.06 512.90,281.81 513.70,282.48 514.50,282.09 515.30,281.10 516.10,281.28 516.90,281.28 517.70,281.02 518.50,281.68 519.30,281.15 520.10,281.07 520.90,281.33 521.70,281.12 522.50,281.44 523.30,281.24 524.10,281.09 524.90,281.04 525.70,281.51 526.50,281.19 527.30,281.55 528.10,281.33 528.90,281.65 529.70,281.21 530.50,281.17 531.30,281.19 532.10,281.57 532.90,281.44 533.70,281.24 534.50,281.13 535.30,282.02 536.10,282.67 536.90,281.78 537.70,281.03 538.50,281.02 539.30,281.06 540.10,281.12 540.90,281.03 541.70,281.04 542.50,281.46 543.30,281.63 544.10,281.14 544.90,281.68 545.70,281.33 546.50,281.56 547.30,281.64 548.10,281.66 548.90,281.02 549.70,281.21 550.50,281.45 551.30,282.17 552.10,283.52 552.90,283.67 553.70,282.10 554.50,281.10 555.30,281.27 556.10,281.23 556.90,281.48 557.70,281.65 558.50,281.12 559.30,281.52 560.10,281.51 560.90,281.58 561.70,281.39 562.50,281.65 563.30,281.25 564.10,281.31 564.90,281.61 565.70,283.34 566.50,282.81 567.30,281.44 568.10,281.13 568.90,281.50 569.70,281.42 570.50,281.50 571.30,281.27 572.10,281.34 572.90,281.11" fill="none" stroke="#ac14ac" stroke-width="1.5" stroke-linejoin="round"/><circle cx="70.3" cy="285.2" r="0.8" fill="#ac14ac"/><line x1="26.50" y1="280.6" x2="573.60" y2="280.6" stroke="#ac14ac" stroke-width="0.8" stroke-dasharray="0.9 1.9" opacity="0.85"/></svg></div></body></html>
